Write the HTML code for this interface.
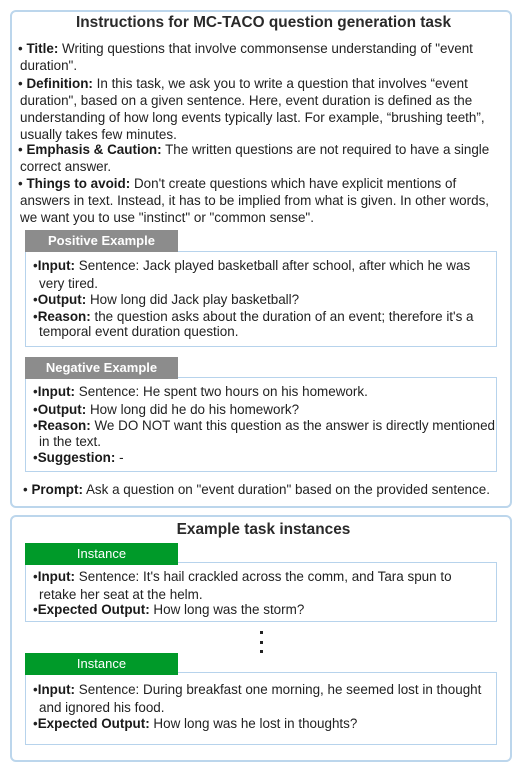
<!DOCTYPE html>
<html><head><meta charset="utf-8"><style>
*{margin:0;padding:0;box-sizing:border-box}
body{width:527px;height:771px;background:#fff;font-family:"Liberation Sans",sans-serif;color:#222;position:relative;overflow:hidden}
.box{position:absolute;border:2px solid #bcd6ec;border-radius:6px}
.in{position:absolute;border:1.5px solid #b7d3ec}
.l{position:absolute;font-size:13.45px;white-space:nowrap;line-height:16px}
.h{position:absolute;font-size:15.4px;font-weight:bold;color:#2a2a2a;text-align:center;width:527px;left:0}
.tag{position:absolute;color:#fff;font-size:13px;text-align:center;line-height:22px;width:153px}
.gray{background:#8c8c8c;font-weight:bold}
.green{background:#009a29}
b{color:#1a1a1a}
.dot{position:absolute;width:3px;height:3px;background:#222;left:260px}
</style></head><body>
<div class="box" style="left:10px;top:10px;width:502px;height:498px"></div>
<div class="h" style="top:14px">Instructions for MC-TACO question generation task</div>
<div class="l" style="left:18px;top:41px">• <b>Title:</b> Writing questions that involve commonsense understanding of "event</div>
<div class="l" style="left:20px;top:58px">duration".</div>
<div class="l" style="left:18px;top:76px">• <b>Definition:</b> In this task, we ask you to write a question that involves “event</div>
<div class="l" style="left:20px;top:93px">duration", based on a given sentence. Here, event duration is defined as the</div>
<div class="l" style="left:20px;top:110px">understanding of how long events typically last. For example, “brushing teeth”,</div>
<div class="l" style="left:20px;top:127px">usually takes few minutes.</div>
<div class="l" style="left:18px;top:142px">• <b>Emphasis &amp; Caution:</b> The written questions are not required to have a single</div>
<div class="l" style="left:20px;top:159px">correct answer.</div>
<div class="l" style="left:18px;top:176px">• <b>Things to avoid:</b> Don't create questions which have explicit mentions of</div>
<div class="l" style="left:20px;top:193px">answers in text. Instead, it has to be implied from what is given. In other words,</div>
<div class="l" style="left:20px;top:210px">we want you to use "instinct" or "common sense".</div>

<div class="in" style="left:25px;top:251px;width:472px;height:96px"></div>
<div class="tag gray" style="left:25px;top:230px">Positive Example</div>
<div class="l" style="left:33px;top:258px">•<b>Input:</b> Sentence: Jack played basketball after school, after which he was</div>
<div class="l" style="left:39px;top:276px">very tired.</div>
<div class="l" style="left:33px;top:292px">•<b>Output:</b> How long did Jack play basketball?</div>
<div class="l" style="left:33px;top:309px">•<b>Reason:</b> the question asks about the duration of an event; therefore it's a</div>
<div class="l" style="left:39px;top:324px">temporal event duration question.</div>

<div class="in" style="left:25px;top:377px;width:472px;height:95px"></div>
<div class="tag gray" style="left:25px;top:357px">Negative Example</div>
<div class="l" style="left:33px;top:384px">•<b>Input:</b> Sentence: He spent two hours on his homework.</div>
<div class="l" style="left:33px;top:402px">•<b>Output:</b> How long did he do his homework?</div>
<div class="l" style="left:33px;top:418px">•<b>Reason:</b> We DO NOT want this question as the answer is directly mentioned</div>
<div class="l" style="left:39px;top:434px">in the text.</div>
<div class="l" style="left:33px;top:450px">•<b>Suggestion:</b> -</div>
<div class="l" style="left:23px;top:482px">• <b>Prompt:</b> Ask a question on "event duration" based on the provided sentence.</div>

<div class="box" style="left:10px;top:515px;width:502px;height:247px"></div>
<div class="h" style="top:521px">Example task instances</div>
<div class="in" style="left:25px;top:562px;width:472px;height:60px"></div>
<div class="tag green" style="left:25px;top:543px">Instance</div>
<div class="l" style="left:33px;top:569px">•<b>Input:</b> Sentence: It's hail crackled across the comm, and Tara spun to</div>
<div class="l" style="left:39px;top:587px">retake her seat at the helm.</div>
<div class="l" style="left:33px;top:602px">•<b>Expected Output:</b> How long was the storm?</div>
<div class="dot" style="top:631px"></div><div class="dot" style="top:641px"></div><div class="dot" style="top:650px"></div>
<div class="in" style="left:25px;top:672px;width:472px;height:73px"></div>
<div class="tag green" style="left:25px;top:653px">Instance</div>
<div class="l" style="left:33px;top:682px">•<b>Input:</b> Sentence: During breakfast one morning, he seemed lost in thought</div>
<div class="l" style="left:39px;top:700px">and ignored his food.</div>
<div class="l" style="left:33px;top:716px">•<b>Expected Output:</b> How long was he lost in thoughts?</div>
</body></html>
